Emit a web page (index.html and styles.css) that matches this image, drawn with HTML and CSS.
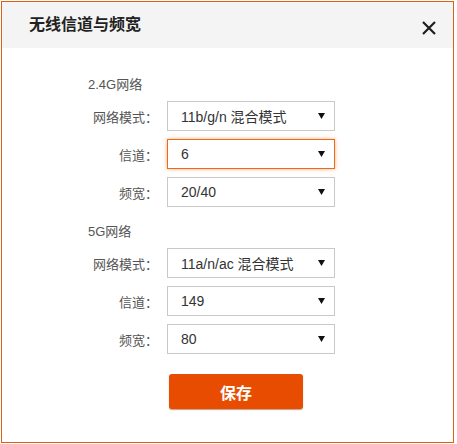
FILE: index.html
```html
<!DOCTYPE html>
<html lang="zh-CN">
<head>
<meta charset="utf-8">
<title>无线信道与频宽</title>
<link rel="stylesheet" href="styles.css">
</head>
<body>
<div class="dialog">
  <div class="header">
    <span class="title">无线信道与频宽</span>
    <svg class="close" width="14" height="14" viewBox="0 0 14 14"><path d="M1 1 L13 13 M13 1 L1 13" stroke="#1e1e1e" stroke-width="2.2" fill="none"/></svg>
  </div>
  <div class="content">
    <div class="section-label">2.4G网络</div>
    <div class="row">
      <span class="label">网络模式<span class="colon">：</span></span>
      <div class="select"><span class="value">11b/g/n 混合模式</span><svg class="arrow" width="7" height="6" viewBox="0 0 7 6"><path d="M0 0 L7 0 L3.5 6 Z" fill="#111"/></svg></div>
    </div>
    <div class="row">
      <span class="label">信道<span class="colon">：</span></span>
      <div class="select focused"><span class="value">6</span><svg class="arrow" width="7" height="6" viewBox="0 0 7 6"><path d="M0 0 L7 0 L3.5 6 Z" fill="#111"/></svg></div>
    </div>
    <div class="row">
      <span class="label">频宽<span class="colon">：</span></span>
      <div class="select"><span class="value">20/40</span><svg class="arrow" width="7" height="6" viewBox="0 0 7 6"><path d="M0 0 L7 0 L3.5 6 Z" fill="#111"/></svg></div>
    </div>
    <div class="section-label second">5G网络</div>
    <div class="row">
      <span class="label">网络模式<span class="colon">：</span></span>
      <div class="select"><span class="value">11a/n/ac 混合模式</span><svg class="arrow" width="7" height="6" viewBox="0 0 7 6"><path d="M0 0 L7 0 L3.5 6 Z" fill="#111"/></svg></div>
    </div>
    <div class="row">
      <span class="label">信道<span class="colon">：</span></span>
      <div class="select"><span class="value">149</span><svg class="arrow" width="7" height="6" viewBox="0 0 7 6"><path d="M0 0 L7 0 L3.5 6 Z" fill="#111"/></svg></div>
    </div>
    <div class="row">
      <span class="label">频宽<span class="colon">：</span></span>
      <div class="select"><span class="value">80</span><svg class="arrow" width="7" height="6" viewBox="0 0 7 6"><path d="M0 0 L7 0 L3.5 6 Z" fill="#111"/></svg></div>
    </div>
    <button class="save">保存</button>
  </div>
</div>
</body>
</html>
```
FILE: styles.css
```css
html, body {
  margin: 0;
  padding: 0;
  background: #ffffff;
}
body {
  font-family: "Liberation Sans", "Noto Sans CJK SC", sans-serif;
}
.dialog {
  margin: 1px 0 0 1px;
  width: 453px;
  height: 442px;
  box-sizing: border-box;
  border: 1px solid #e0600f;
  background: #fff;
}
.header {
  height: 46px;
  background: #f4f4f4;
  display: flex;
  align-items: center;
  justify-content: space-between;
  padding: 0 17px 0 27px;
}
.title {
  font-size: 16px;
  font-weight: 700;
  color: #222;
  font-family: "Noto Sans CJK SC", sans-serif;
  margin-top: -4px;
}
.close {
  display: block;
  margin-top: 6px;
}
.content {
  padding-top: 27px;
  display: flex;
  flex-direction: column;
}
.section-label {
  height: 20px;
  line-height: 20px;
  font-size: 13px;
  color: #555;
  padding-left: 86px;
  margin-bottom: 6px;
}
.section-label.second {
  margin-top: 7px;
}
.row {
  display: flex;
  align-items: center;
  height: 30px;
  margin-bottom: 8px;
}
.label {
  width: 156px;
  text-align: right;
  font-size: 13px;
  color: #555;
  margin-right: 9px;
  font-family: "Noto Sans CJK SC", sans-serif;
}
.colon {
  font-family: "Noto Sans CJK TC", sans-serif;
}
.select {
  width: 168px;
  height: 30px;
  box-sizing: border-box;
  border: 1px solid #c9c9c9;
  display: flex;
  align-items: center;
  justify-content: space-between;
  padding: 0 9px 0 13px;
  font-size: 14px;
  color: #333;
  background: #fff;
}
.select.focused {
  border-color: #ee6a1a;
  box-shadow: 0 0 4px rgba(240, 110, 30, 0.55);
}
.arrow {
  display: block;
}
.save {
  margin: 12px 0 0 167px;
  width: 134px;
  height: 35px;
  border: none;
  border-radius: 3px;
  background: #e84c00;
  color: #fff;
  font-size: 16px;
  font-weight: 700;
  font-family: "Noto Sans CJK SC", sans-serif;
  box-shadow: 0 1px 1px rgba(150, 60, 0, 0.5);
  padding: 0;
}
```
